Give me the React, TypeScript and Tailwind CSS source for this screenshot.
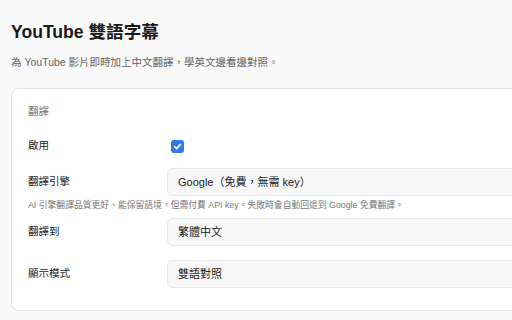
export default function App() {
  const font = { fontFamily: '"Liberation Sans", "Noto Sans CJK TC", sans-serif' };
  return (
    <div
      className="h-screen w-screen overflow-hidden bg-[#f9f9f9] px-[11px] pt-[22px] text-[#222]"
      style={font}
    >
      <h1 className="text-[17.6px] font-bold leading-[20px] text-[#1a1a1a]">YouTube 雙語字幕</h1>
      <p className="mt-[13px] text-[10.5px] leading-[14px] text-[#666]">
        為 YouTube 影片即時加上中文翻譯，學英文邊看邊對照。
      </p>

      <div className="mt-[19px] w-[600px] rounded-[8px] border border-[#e5e5e5] bg-white px-[16px] pt-[15px] pb-[22px]">
        <div className="text-[10.5px] leading-[14px] text-[#777]">翻譯</div>

        <div className="mt-[14px] flex h-[28px] items-center">
          <div className="w-[139px] text-[10.5px] text-[#222]">啟用</div>
          <div className="ml-[4px] flex h-[13px] w-[13px] items-center justify-center rounded-[3px] bg-[#3478f6]">
            <svg width="9" height="9" viewBox="0 0 10 10" fill="none">
              <path d="M1.8 5.2 L4 7.4 L8.3 2.6" stroke="white" strokeWidth="1.8" strokeLinecap="round" strokeLinejoin="round" />
            </svg>
          </div>
        </div>

        <div className="mt-[8px] flex h-[28px] items-center">
          <div className="w-[139px] text-[10.5px] text-[#222]">翻譯引擎</div>
          <div className="flex h-[28px] flex-1 items-center rounded-[6px] border border-[#e8e8e8] bg-[#f8f8f8] px-[10px] text-[11px] text-[#222]">
            Google（免費，無需 key）
          </div>
        </div>

        <p className="mt-[3px] text-[8.8px] leading-[12px] text-[#777]">
          AI 引擎翻譯品質更好、能保留語境，但需付費 API key。失敗時會自動回退到 Google 免費翻譯。
        </p>

        <div className="mt-[7px] flex h-[28px] items-center">
          <div className="w-[139px] text-[10.5px] text-[#222]">翻譯到</div>
          <div className="flex h-[28px] flex-1 items-center rounded-[6px] border border-[#e8e8e8] bg-[#f8f8f8] px-[10px] text-[11px] text-[#222]">
            繁體中文
          </div>
        </div>

        <div className="mt-[14px] flex h-[28px] items-center">
          <div className="w-[139px] text-[10.5px] text-[#222]">顯示模式</div>
          <div className="flex h-[28px] flex-1 items-center rounded-[6px] border border-[#e8e8e8] bg-[#f8f8f8] px-[10px] text-[11px] text-[#222]">
            雙語對照
          </div>
        </div>
      </div>
    </div>
  );
}
